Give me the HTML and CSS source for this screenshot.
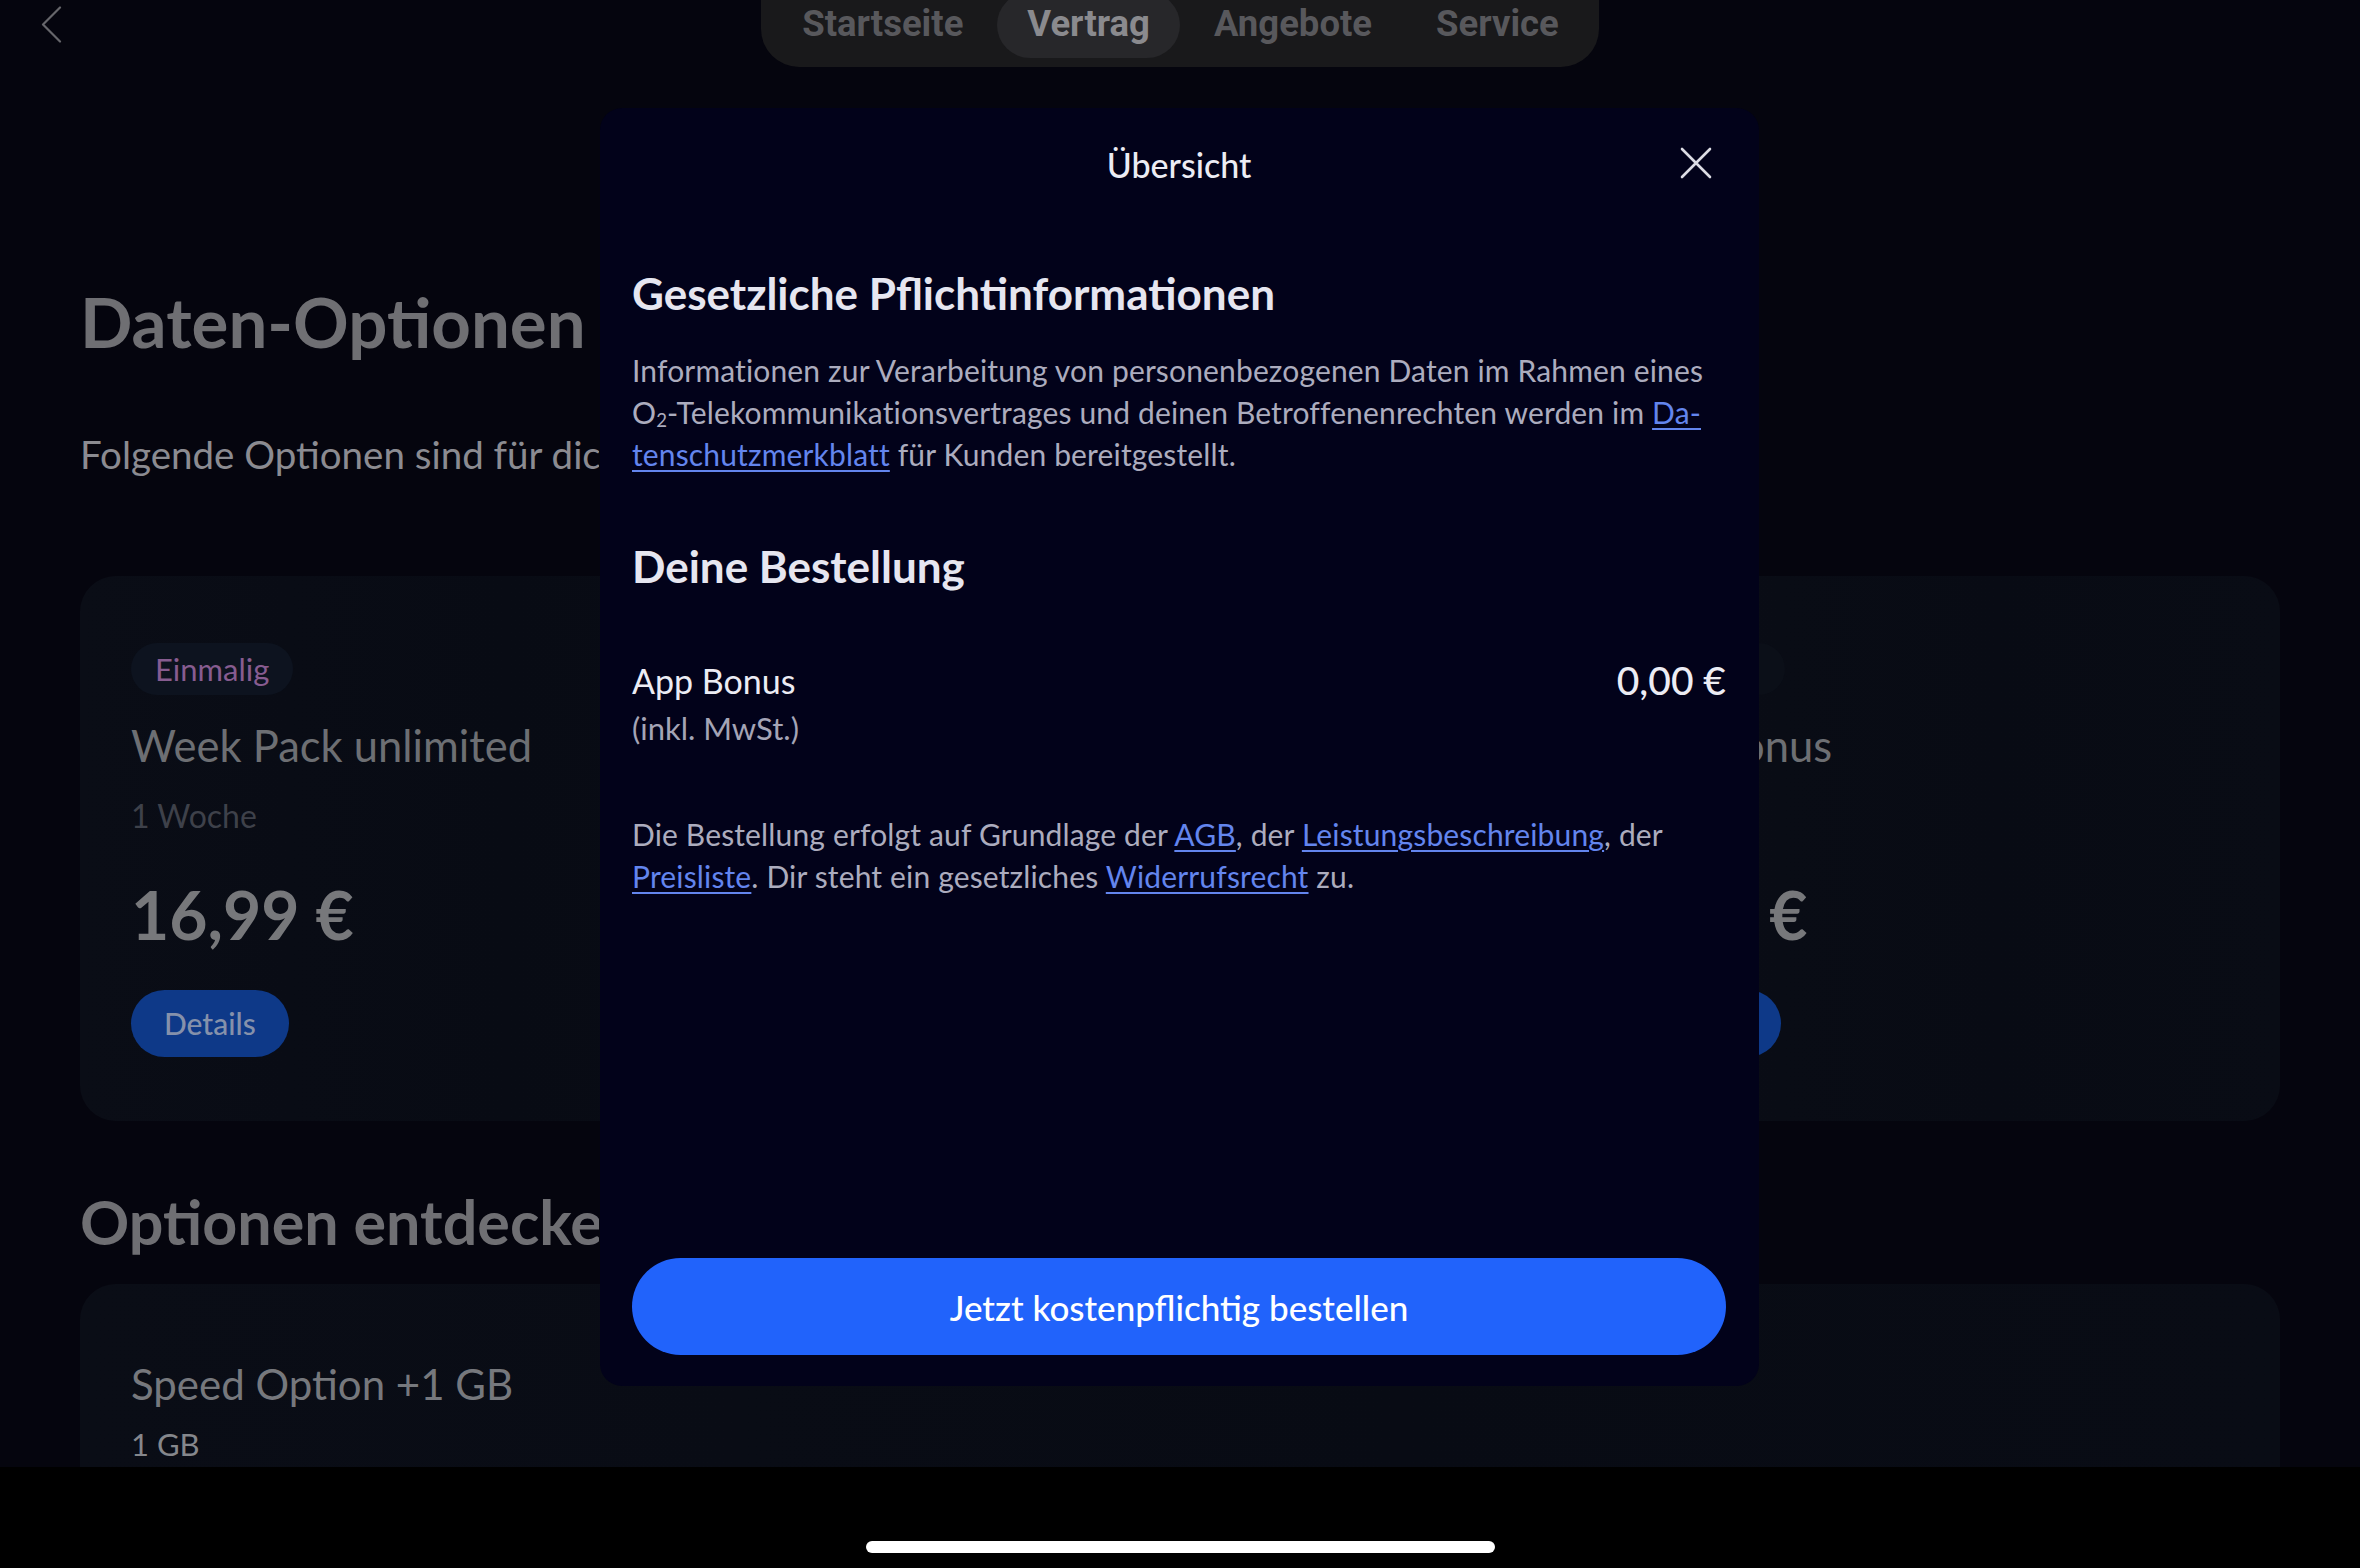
FILE: index.html
```html
<!DOCTYPE html>
<html lang="de">
<head>
<meta charset="utf-8">
<title>Daten-Optionen – Übersicht</title>
<link rel="stylesheet" href="styles.css">
</head>
<body>
<div class="device">
  <div class="screen">
    <header class="topbar">
      <svg class="back" width="21" height="37" viewBox="0 0 21 37" aria-hidden="true">
        <path d="M19 1.5 L2 18.5 L19 35.5" fill="none" stroke="currentColor" stroke-width="2.2" stroke-linecap="round" stroke-linejoin="round"/>
      </svg>
      <nav class="tabs">
        <span class="tab">Startseite</span>
        <span class="tab active">Vertrag</span>
        <span class="tab">Angebote</span>
        <span class="tab">Service</span>
      </nav>
      <span class="topbar-spacer"></span>
    </header>

    <main class="page">
      <h1 class="page-title">Daten-Optionen</h1>
      <p class="page-sub">Folgende Optionen sind für dich verfügbar.</p>

      <div class="cards">
        <article class="card">
          <span class="badge">Einmalig</span>
          <h3 class="card-title">Week Pack unlimited</h3>
          <p class="card-meta">1 Woche</p>
          <p class="card-price">16,99 €</p>
          <span class="btn-details">Details</span>
        </article>
        <article class="card"></article>
        <article class="card">
          <span class="badge badge-empty"></span>
          <h3 class="card-title">App Bonus</h3>
          <p class="card-meta">&nbsp;</p>
          <p class="card-price">0,00 €</p>
          <span class="btn-details">Details</span>
        </article>
      </div>

      <h2 class="section-title">Optionen entdecken</h2>
      <article class="card card-wide">
        <h3 class="card-title">Speed Option +1 GB</h3>
        <p class="card-meta card-meta-light">1 GB</p>
      </article>
    </main>
  </div>

  <div class="home-area"><span class="home-indicator"></span></div>

  <div class="modal" role="dialog" aria-label="Übersicht">
    <div class="modal-head">
      <span class="modal-title">Übersicht</span>
      <span class="close">
        <svg width="32" height="32" viewBox="0 0 32 32" aria-hidden="true">
          <path d="M2 2 L30 30 M30 2 L2 30" fill="none" stroke="currentColor" stroke-width="2.6" stroke-linecap="round"/>
        </svg>
      </span>
    </div>

    <section class="modal-section">
      <h2 class="modal-h">Gesetzliche Pflichtinformationen</h2>
      <p class="modal-text">Informationen zur Verarbeitung von personenbezogenen Daten im Rahmen eines<br>O<sub class="sub">2</sub>-Telekommunikationsvertrages und deinen Betroffenenrechten werden im <a class="link" href="#">Da-<br>tenschutzmerkblatt</a> für Kunden bereitgestellt.</p>
    </section>

    <section class="modal-section order">
      <h2 class="modal-h">Deine Bestellung</h2>
      <div class="order-row">
        <span class="order-name">App Bonus</span>
        <span class="order-price">0,00 €</span>
      </div>
      <p class="order-vat">(inkl. MwSt.)</p>
      <p class="modal-text terms">Die Bestellung erfolgt auf Grundlage der <a class="link" href="#">AGB</a>, der <a class="link" href="#">Leistungsbeschreibung</a>, der<br><a class="link" href="#">Preisliste</a>. Dir steht ein gesetzliches <a class="link" href="#">Widerrufsrecht</a> zu.</p>
    </section>

    <button class="order-btn" type="button">Jetzt kostenpflichtig bestellen</button>
  </div>
</div>
</body>
</html>
```

FILE: styles.css
```css
* {
  box-sizing: border-box;
}

html, body {
  margin: 0;
  padding: 0;
  background: #000;
}

body {
  font-family: "Lato", "Noto Sans", sans-serif;
  width: 2360px;
  height: 1568px;
  overflow: hidden;
}

.device {
  position: relative;
  width: 2360px;
  height: 1568px;
  display: flex;
  flex-direction: column;
}

.screen {
  height: 1467px;
  overflow: hidden;
  background: #05050e;
  display: flex;
  flex-direction: column;
}

/* ---------- top bar ---------- */
.topbar {
  height: 67px;
  display: grid;
  grid-template-columns: 1fr auto 1fr;
  padding: 0 41px;
  flex: none;
}

.back {
  color: #66666b;
  margin-top: 6px;
}

.tabs {
  display: flex;
  gap: 4px;
  margin-top: -20px;
  height: 87px;
  padding: 12px 10px 9px 11px;
  background: #19191b;
  border-radius: 0 0 38px 38px;
  font-family: "Roboto", "Inter", sans-serif;
  font-weight: 700;
  font-size: 36.5px;
}

.tab {
  height: 66px;
  line-height: 64px;
  padding: 0 30px;
  color: #58585c;
  border-radius: 33px;
  white-space: nowrap;
}

.tab.active {
  background: #27272a;
  color: #8a8a8e;
}

/* ---------- page ---------- */
.page {
  padding: 0 80px;
}

.page-title {
  margin: 213px 0 0;
  width: fit-content;
  font-size: 69px;
  line-height: 84px;
  font-weight: 700;
  color: #6f6f73;
  white-space: nowrap;
}

.page-sub {
  margin: 66px 0 0;
  width: 519px;
  overflow: hidden;
  font-size: 38.5px;
  line-height: 48px;
  color: #8b8b91;
  white-space: nowrap;
}

.cards {
  margin-top: 98px;
  display: grid;
  grid-template-columns: repeat(3, 1fr);
  gap: 38px;
}

.card {
  background: linear-gradient(90deg, #0a0d16 0%, #080b14 60%, #090c15 100%);
  border-radius: 36px;
  padding: 67px 51px 64px;
  display: flex;
  flex-direction: column;
  align-items: flex-start;
  min-height: 545px;
}

.badge {
  height: 52px;
  line-height: 52px;
  padding: 0 24px;
  border-radius: 26px;
  background: #0d131f;
  color: #875c90;
  font-size: 31px;
}

.badge-empty {
  width: 162px;
  background: #0b0f18;
}

.card-title {
  margin: 22px 0 0;
  font-size: 43.5px;
  line-height: 56px;
  font-weight: 400;
  color: #6d6f73;
  white-space: nowrap;
}

.card-meta {
  margin: 21px 0 0;
  font-size: 32px;
  line-height: 44px;
  color: #3e414a;
}

.card-price {
  margin: 37px 0 0;
  font-size: 66px;
  line-height: 80px;
  font-weight: 700;
  color: #77787b;
  white-space: nowrap;
}

.btn-details {
  margin-top: 35px;
  height: 67px;
  line-height: 67px;
  padding: 0 33px;
  border-radius: 34px;
  background: #0e3988;
  color: #8591ab;
  font-size: 30px;
  font-weight: 500;
}

.section-title {
  margin: 63px 0 0;
  width: 519px;
  overflow: hidden;
  font-size: 61px;
  line-height: 76px;
  font-weight: 700;
  color: #6f6f73;
  white-space: nowrap;
}

.card-wide {
  margin-top: 24px;
  padding-top: 72px;
  min-height: 300px;
}

.card-wide .card-title {
  margin-top: 0;
  font-size: 42px;
  color: #76787d;
}

.card-meta-light {
  margin-top: 10px;
  font-size: 31px;
  color: #85878c;
}

/* ---------- home indicator ---------- */
.home-area {
  flex: none;
  height: 101px;
  background: #000;
  display: flex;
  justify-content: center;
  padding-top: 74px;
}

.home-indicator {
  width: 629px;
  height: 12px;
  border-radius: 6px;
  background: #fff;
}

/* ---------- modal ---------- */
.modal {
  position: absolute;
  top: 108px;
  left: 600px;
  width: 1159px;
  height: 1278px;
  background: #02021a;
  border-radius: 22px;
  padding: 0 33px 31px 32px;
  display: flex;
  flex-direction: column;
  color: #e6e6f0;
}

.modal-head {
  position: relative;
  height: 112px;
  display: flex;
  align-items: center;
  justify-content: center;
}

.modal-title {
  font-size: 34px;
  font-weight: 500;
  color: #ececf4;
}

.close {
  position: absolute;
  right: 0;
  top: 25px;
  width: 60px;
  height: 60px;
  display: flex;
  align-items: center;
  justify-content: center;
  color: #dcdce4;
}

.modal-section {
  margin-top: 48px;
}

.modal-h {
  margin: 0;
  font-size: 44px;
  line-height: 50px;
  font-weight: 700;
  color: #e6e6f0;
  white-space: nowrap;
}

.modal-text {
  margin: 31px 0 0;
  font-size: 30px;
  line-height: 42px;
  letter-spacing: 0.15px;
  color: #acacbe;
  white-space: nowrap;
}

.sub {
  font-size: 0.62em;
  vertical-align: -0.18em;
  line-height: 0;
}

.link {
  color: #6385ee;
  text-decoration: underline;
  text-decoration-thickness: 2px;
  text-underline-offset: 4px;
}

.order {
  margin-top: 66px;
}

.order-row {
  margin-top: 67px;
  display: flex;
  justify-content: space-between;
  align-items: center;
  height: 44px;
}

.order-name {
  font-size: 34px;
  color: #ececf4;
}

.order-price {
  font-size: 39px;
  font-weight: 500;
  color: #ececf4;
}

.order-vat {
  margin: 5px 0 0;
  font-size: 31px;
  line-height: 42px;
  color: #a4a4b6;
}

.terms {
  margin-top: 64px;
}

.order-btn {
  margin-top: auto;
  height: 97px;
  width: 100%;
  border: 0;
  border-radius: 49px;
  background: #2163fb;
  color: #ffffff;
  font-family: "Lato", "Noto Sans", sans-serif;
  font-size: 35px;
  font-weight: 500;
}
```
